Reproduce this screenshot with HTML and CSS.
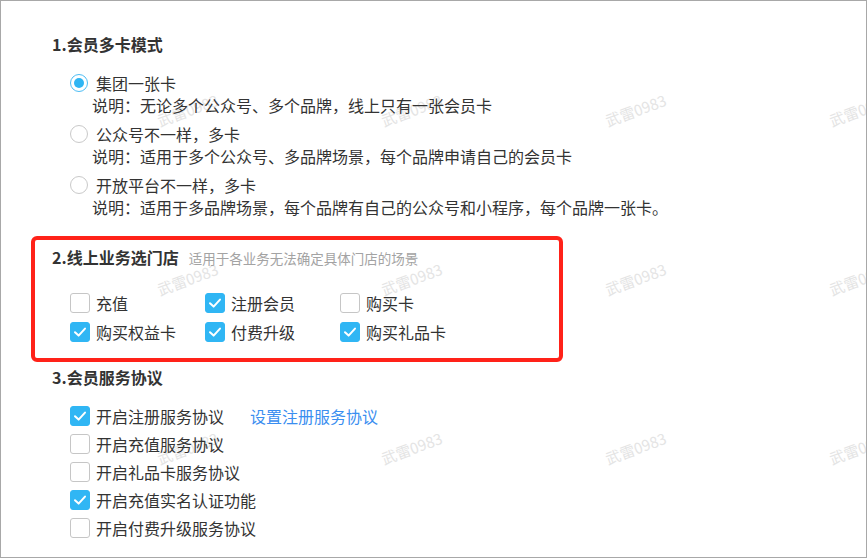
FILE: index.html
```html
<!DOCTYPE html>
<html lang="zh-CN">
<head>
<meta charset="utf-8">
<title>会员设置</title>
<link rel="stylesheet" href="styles.css">
</head>
<body>
<div class="frame">
  <div class="watermarks">
    <span>武雷0983</span><span>武雷0983</span><span>武雷0983</span><span>武雷0983</span>
    <span>武雷0983</span><span>武雷0983</span><span>武雷0983</span><span>武雷0983</span>
    <span>武雷0983</span><span>武雷0983</span><span>武雷0983</span><span>武雷0983</span>
  </div>

  <section class="sec sec1">
    <h2 class="title">1.会员多卡模式</h2>
    <div class="options">
      <div class="opt">
        <div class="radio-row"><span class="radio on"></span><span>集团一张卡</span></div>
        <p class="desc">说明：无论多个公众号、多个品牌，线上只有一张会员卡</p>
      </div>
      <div class="opt">
        <div class="radio-row"><span class="radio"></span><span>公众号不一样，多卡</span></div>
        <p class="desc">说明：适用于多个公众号、多品牌场景，每个品牌申请自己的会员卡</p>
      </div>
      <div class="opt">
        <div class="radio-row"><span class="radio"></span><span>开放平台不一样，多卡</span></div>
        <p class="desc">说明：适用于多品牌场景，每个品牌有自己的公众号和小程序，每个品牌一张卡。</p>
      </div>
    </div>
  </section>

  <section class="sec sec2">
    <div class="mark"></div>
    <h2 class="title">2.线上业务选门店<span class="sub">适用于各业务无法确定具体门店的场景</span></h2>
    <div class="cb-grid">
      <div class="cb-row"><span class="cb"></span><span>充值</span></div>
      <div class="cb-row"><span class="cb on"><svg viewBox="0 0 20 20"><polyline points="5,10.2 8.6,13.6 15,6.6"/></svg></span><span>注册会员</span></div>
      <div class="cb-row"><span class="cb"></span><span>购买卡</span></div>
      <div class="cb-row"><span class="cb on"><svg viewBox="0 0 20 20"><polyline points="5,10.2 8.6,13.6 15,6.6"/></svg></span><span>购买权益卡</span></div>
      <div class="cb-row"><span class="cb on"><svg viewBox="0 0 20 20"><polyline points="5,10.2 8.6,13.6 15,6.6"/></svg></span><span>付费升级</span></div>
      <div class="cb-row"><span class="cb on"><svg viewBox="0 0 20 20"><polyline points="5,10.2 8.6,13.6 15,6.6"/></svg></span><span>购买礼品卡</span></div>
    </div>
  </section>

  <section class="sec sec3">
    <h2 class="title">3.会员服务协议</h2>
    <div class="cb-list">
      <div class="cb-row"><span class="cb on"><svg viewBox="0 0 20 20"><polyline points="5,10.2 8.6,13.6 15,6.6"/></svg></span><span>开启注册服务协议</span><a class="link" href="#">设置注册服务协议</a></div>
      <div class="cb-row"><span class="cb"></span><span>开启充值服务协议</span></div>
      <div class="cb-row"><span class="cb"></span><span>开启礼品卡服务协议</span></div>
      <div class="cb-row"><span class="cb on"><svg viewBox="0 0 20 20"><polyline points="5,10.2 8.6,13.6 15,6.6"/></svg></span><span>开启充值实名认证功能</span></div>
      <div class="cb-row"><span class="cb"></span><span>开启付费升级服务协议</span></div>
    </div>
  </section>
</div>
</body>
</html>
```

FILE: styles.css
```css
* { box-sizing: border-box; }

html, body {
  margin: 0;
  padding: 0;
  background: #ffffff;
}

body {
  font-family: "Noto Sans CJK SC", "Noto Sans", "Liberation Sans", sans-serif;
  font-size: 16px;
  color: #333333;
}

.frame {
  position: relative;
  width: 867px;
  height: 558px;
  border: 1px solid #a8a8a8;
  padding: 32px 0 0 51px;
  overflow: hidden;
}

.watermarks {
  position: absolute;
  left: 155px;
  top: 99px;
  display: grid;
  grid-template-columns: repeat(4, 224px);
  grid-auto-rows: 169px;
  pointer-events: none;
  z-index: 0;
}

.watermarks span {
  display: block;
  width: 66px;
  height: 20px;
  line-height: 20px;
  font-size: 15px;
  color: #e4e4e4;
  white-space: nowrap;
  transform: rotate(-20deg);
  transform-origin: center;
}

.sec {
  position: relative;
  z-index: 1;
}

.title {
  margin: 0;
  font-size: 16px;
  line-height: 22px;
  font-weight: 700;
  color: #333333;
}

.sub {
  margin-left: 10px;
  font-size: 13.5px;
  font-weight: 400;
  color: #a3a3a3;
}

/* section 1 */
.options {
  margin-top: 17px;
  padding-left: 18px;
  display: flex;
  flex-direction: column;
  gap: 7px;
}

.radio-row {
  display: flex;
  align-items: center;
  gap: 8px;
  height: 22px;
  line-height: 22px;
}

.radio {
  position: relative;
  width: 18px;
  height: 18px;
  border-radius: 50%;
  border: 1px solid #c9c9c9;
  background: #ffffff;
  flex: none;
}

.radio.on {
  border: 1.5px solid #4cbdf4;
}

.radio.on::after {
  content: "";
  position: absolute;
  left: 2.5px;
  top: 2.5px;
  width: 10px;
  height: 10px;
  border-radius: 50%;
  background: #2fb5f3;
}

.desc {
  margin: 0;
  padding-left: 22px;
  line-height: 22px;
  color: #333333;
}

/* section 2 */
.sec2 {
  margin-top: 28px;
}

.mark {
  position: absolute;
  left: -21px;
  top: -10px;
  width: 532px;
  height: 126px;
  border: 4px solid #ff2219;
  border-radius: 6px;
  pointer-events: none;
}

.cb-grid {
  margin-top: 23px;
  padding-left: 18px;
  display: grid;
  grid-template-columns: repeat(3, 135px);
  grid-auto-rows: 22px;
  row-gap: 7px;
}

.cb-row {
  display: flex;
  align-items: center;
  gap: 6px;
  height: 22px;
  line-height: 22px;
  white-space: nowrap;
}

.cb {
  width: 20px;
  height: 20px;
  border: 1px solid #c6c6c6;
  border-radius: 3px;
  background: #ffffff;
  flex: none;
  display: flex;
  align-items: center;
  justify-content: center;
}

.cb.on {
  border-color: #30b6f4;
  background: #30b6f4;
}

.cb svg {
  width: 20px;
  height: 20px;
  flex: none;
}

.cb svg polyline {
  fill: none;
  stroke: #ffffff;
  stroke-width: 2;
  stroke-linecap: round;
  stroke-linejoin: round;
}

/* section 3 */
.sec3 {
  margin-top: 23px;
}

.cb-list {
  margin-top: 17px;
  padding-left: 18px;
  display: flex;
  flex-direction: column;
  gap: 6px;
}

.link {
  margin-left: 20px;
  color: #3a8ef0;
  text-decoration: none;
}
```
